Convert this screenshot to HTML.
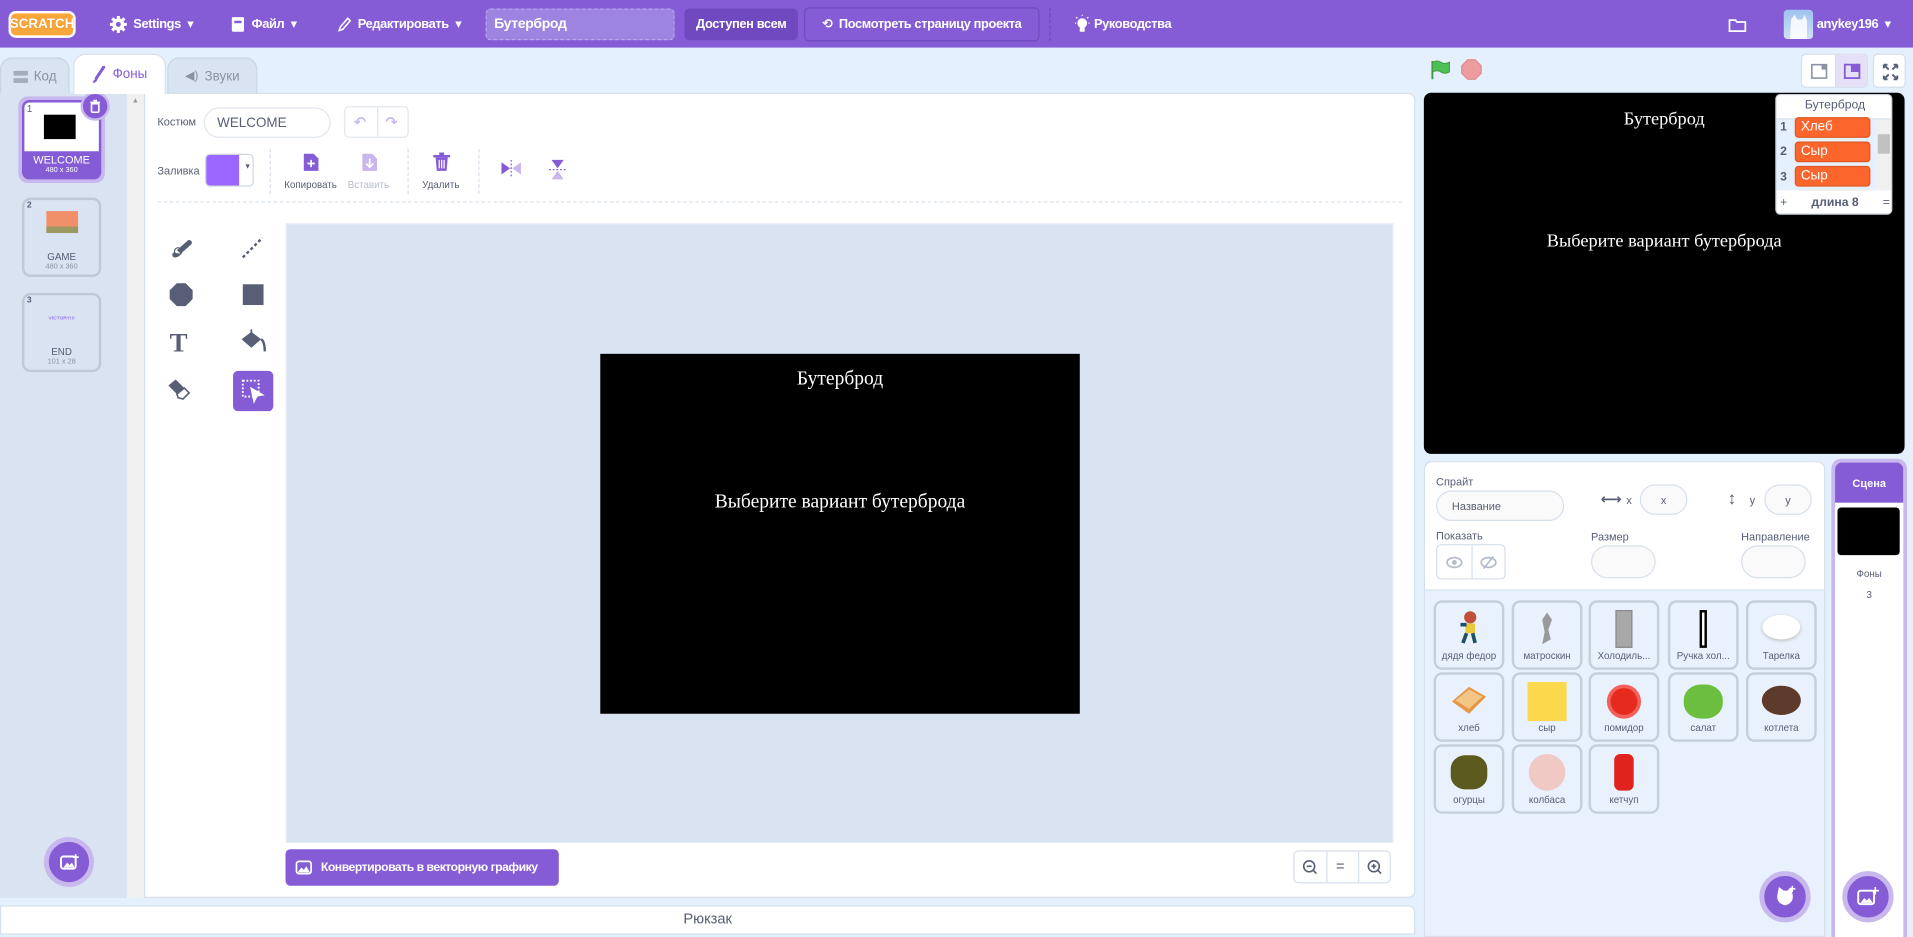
<!DOCTYPE html>
<html><head><meta charset="utf-8">
<style>
*{box-sizing:border-box;margin:0;padding:0}
html,body{width:1913px;height:931px;overflow:hidden;background:#e5f0ff;font-family:"Liberation Sans","DejaVu Sans",sans-serif}
#r{position:absolute;left:0;top:0;width:1568px;height:763px;transform:scale(1.2201);transform-origin:0 0;background:#e5f0ff}
.a{position:absolute}
.top{left:0;top:0;width:1568px;height:39px;background:#855cd6;color:#fff;font-size:10.5px;font-weight:bold}
.top .a{display:flex;align-items:center;height:39px;top:0;letter-spacing:-0.3px;white-space:nowrap}
.tab{top:47px;height:30px;border:1px solid #c9d4e3;border-bottom:none;border-radius:10px 10px 0 0;background:#d9e3f2;color:#8a93a3;font-size:11px;display:flex;align-items:center;justify-content:center;gap:5px}
.pnl{background:#fff;border:1px solid #d6dfeb}
.lbl{font-size:9px;color:#575e75}
.tile{width:58px;height:57px;border:2px solid #c5cfdc;border-radius:7px;background:#e9f1fc;font-size:8px;color:#575e75;text-align:center}
.tile .n{position:absolute;bottom:5px;left:0;right:0}
.tile .p{position:absolute;left:50%;top:6px;transform:translateX(-50%)}
.li{left:15px;width:62px;height:17px;background:#fc662c;border:1px solid #e0561f;border-radius:3px;color:#fff;font-size:11px;padding-left:4px;line-height:15px}
.ln{left:3px;font-size:10px;color:#575e75;font-weight:bold}
.circ{border-radius:50%;background:#855cd6;border:4px solid #c9b8ee}
</style></head><body><div id="r">
<div class="a top">
 <div class="a" style="left:7px"><div style="background:#f9a73b;border:2px solid #fff;border-radius:6px;width:55px;height:22px;color:#fff;font-size:11px;font-weight:bold;display:flex;align-items:center;justify-content:center;letter-spacing:0;text-shadow:0 0 1px #e07a00">SCRATCH</div></div>
 <div class="a" style="left:90px"><svg width="14" height="14" viewBox="0 0 14 14"><circle cx="7" cy="7" r="5" fill="#fff"/><g stroke="#fff" stroke-width="2.5"><path d="M7 0v14M0 7h14M2 2l10 10M12 2 2 12"/></g><circle cx="7" cy="7" r="2" fill="#855cd6"/></svg>&nbsp;&nbsp;Settings&nbsp;&nbsp;▾</div>
 <div class="a" style="left:189px"><svg width="12" height="14"><rect x="1" y="1" width="10" height="12" rx="1" fill="#fff"/><rect x="3" y="4" width="6" height="2" fill="#855cd6"/></svg>&nbsp;&nbsp;Файл&nbsp;&nbsp;▾</div>
 <div class="a" style="left:276px"><svg width="12" height="14"><path d="M2 12 L3 9 L9 2 L11 4 L5 11Z" fill="none" stroke="#fff" stroke-width="1.3"/></svg>&nbsp;&nbsp;Редактировать&nbsp;&nbsp;▾</div>
 <div class="a" style="left:398px;top:7px;height:26px;width:155px;background:#9d84e0;border:1px dashed #b9a6ec;border-radius:4px;padding-left:6px;font-size:11.5px">Бутерброд</div>
 <div class="a" style="left:561px;top:7px;height:26px;width:93px;background:#7048bf;border-radius:4px;justify-content:center">Доступен всем</div>
 <div class="a" style="left:659px;top:6px;height:28px;width:193px;border:1px solid #6d4ab9;border-radius:4px;justify-content:center">⟲&nbsp;&nbsp;Посмотреть страницу проекта</div>
 <div class="a" style="left:860px;top:6px;height:28px;border-left:1px dashed #6d4ab9"></div>
 <div class="a" style="left:880px"><svg width="14" height="16"><circle cx="7" cy="7" r="4" fill="#fff"/><rect x="5" y="10" width="4" height="4" fill="#fff"/><path d="M7 0v1M1 7h1M12 7h1M2 2l1 1M12 2l-1 1" stroke="#fff"/></svg>&nbsp;Руководства</div>
 <div class="a" style="left:1416px"><svg width="16" height="14"><path d="M1.5 3.5h5l1 1.5h7v7.5h-13z" fill="none" stroke="#fff" stroke-width="1.4"/></svg></div>
 <div class="a" style="left:1462px"><div style="width:24px;height:24px;border-radius:3px;background:linear-gradient(#9ec3ef,#cfe2f7)"><svg width="24" height="24"><path d="M5 24 L6 8 L9 4 L11 8 L15 8 L17 4 L19 9 L19 24Z" fill="#fff" opacity=".85"/></svg></div></div>
 <div class="a" style="left:1489px">anykey196&nbsp;&nbsp;▾</div>
</div>
<div class="a tab" style="left:0;width:57px"><svg width="12" height="10"><rect x="0" y="0" width="12" height="4" rx="1" fill="#a5adbb"/><rect x="0" y="6" width="12" height="4" rx="1" fill="#a5adbb"/></svg>Код</div>
<div class="a tab" style="left:60px;width:76px;top:44px;height:33px;background:#fff;color:#855cd6;z-index:2;border-color:#d6dfeb"><svg width="12" height="14"><path d="M10 1 L4 10" stroke="#855cd6" stroke-width="2.5" stroke-linecap="round"/><path d="M4 10 Q1 12 1 14 Q4 14 5 11Z" fill="#855cd6"/></svg>Фоны</div>
<div class="a tab" style="left:137px;width:74px"><span style="font-size:10px">◀)</span>Звуки</div>
<div class="a" style="left:0;top:76px;width:104px;height:660px;background:#d9e3f2"></div>
<div class="a" style="left:104px;top:76px;width:14px;height:660px;background:#f0f0f0"><div style="font-size:6px;color:#999;text-align:center;margin-top:4px">▲</div></div>
<div class="a" style="left:15px;top:79px;width:71px;height:71px;border-radius:8px;background:#c9b8ee"></div>
<div class="a" style="left:18px;top:82px;width:65px;height:65px;border-radius:6px;background:#855cd6;overflow:hidden">
 <div class="a" style="left:2px;top:2px;width:61px;height:40px;background:#fff;border-radius:4px 4px 0 0"></div>
 <div class="a" style="left:4px;top:3px;font-size:8px;color:#575e75">1</div>
 <div class="a" style="left:18px;top:12px;width:26px;height:20px;background:#000"></div>
 <div class="a" style="left:0;width:65px;top:44px;font-size:9px;color:#fff;text-align:center">WELCOME</div>
 <div class="a" style="left:0;width:65px;top:55px;font-size:6px;color:#fff;text-align:center">480 x 360</div>
</div>
<div class="a circ" style="left:66px;top:75px;width:24px;height:24px;border-width:2px;display:flex;align-items:center;justify-content:center"><svg width="10" height="12"><path d="M1 3h8M3.5 1.5h3" stroke="#fff" stroke-width="1.4"/><rect x="2" y="4" width="6" height="7" rx="1" fill="none" stroke="#fff" stroke-width="1.3"/></svg></div>
<div class="a" style="left:18px;top:162px;width:65px;height:65px;border:2px solid #bfc9d6;border-radius:7px;background:#d9e3f2">
 <div class="a" style="left:2px;top:1px;font-size:7px;color:#575e75;font-weight:bold">2</div>
 <div class="a" style="left:18px;top:9px;width:26px;height:18px;background:linear-gradient(#f28f6b 70%,#9a9a62 70%)"></div>
 <div class="a" style="left:0;width:61px;top:42px;font-size:8px;color:#575e75;text-align:center">GAME</div>
 <div class="a" style="left:0;width:61px;top:52px;font-size:6px;color:#8a93a3;text-align:center">480 x 360</div>
</div>
<div class="a" style="left:18px;top:240px;width:65px;height:65px;border:2px solid #bfc9d6;border-radius:7px;background:#d9e3f2">
 <div class="a" style="left:2px;top:1px;font-size:7px;color:#575e75;font-weight:bold">3</div>
 <div class="a" style="left:0;width:61px;top:16px;font-size:4px;color:#9a77f0;text-align:center;font-weight:bold">VICTORY!!!</div>
 <div class="a" style="left:0;width:61px;top:42px;font-size:8px;color:#575e75;text-align:center">END</div>
 <div class="a" style="left:0;width:61px;top:52px;font-size:6px;color:#8a93a3;text-align:center">101 x 28</div>
</div>
<div class="a circ" style="left:36px;top:686px;width:41px;height:41px;display:flex;align-items:center;justify-content:center"><svg width="16" height="14"><rect x="1" y="2" width="12" height="10" rx="2" fill="none" stroke="#fff" stroke-width="1.6"/><path d="M3 11l3-4 2 2 2-2 2 4z" fill="#fff"/><path d="M13 0v5M10.5 2.5h5" stroke="#fff" stroke-width="1.4"/></svg></div>
<div class="a pnl" style="left:118px;top:76px;width:1042px;height:660px;border-radius:0 6px 6px 0"></div>
<div class="a lbl" style="left:129px;top:95px;font-size:9px">Костюм</div>
<div class="a" style="left:167px;top:88px;width:104px;height:25px;border:1px solid #e1e6ee;border-radius:13px;font-size:11px;color:#575e75;padding:6px 0 0 10px">WELCOME</div>
<div class="a" style="left:282px;top:87px;width:53px;height:26px;border:1px solid #e1e6ee;border-radius:4px"><div class="a" style="left:26px;top:0;height:24px;border-left:1px solid #e1e6ee"></div><div class="a" style="left:7px;top:5px;color:#c9b8ee;font-size:12px;font-weight:bold">↶</div><div class="a" style="left:33px;top:5px;color:#c9b8ee;font-size:12px;font-weight:bold">↷</div></div>
<div class="a lbl" style="left:129px;top:135px">Заливка</div>
<div class="a" style="left:168px;top:126px;width:40px;height:27px;border:1px solid #cfd6e1;border-radius:4px;overflow:hidden"><div style="width:27px;height:27px;background:#9966ff"></div><div class="a" style="left:31px;top:7px;font-size:6px;color:#575e75">▼</div></div>
<div class="a" style="left:221px;top:122px;height:37px;border-left:1px dashed #d6dfeb"></div>
<div class="a" style="left:334px;top:122px;height:37px;border-left:1px dashed #d6dfeb"></div>
<div class="a" style="left:392px;top:122px;height:37px;border-left:1px dashed #d6dfeb"></div>
<svg class="a" style="left:248px;top:125px" width="14" height="16"><path d="M1 1h8l4 4v10H1z" fill="#855cd6"/><path d="M7 6v6M4 9h6" stroke="#fff" stroke-width="1.4"/></svg>
<div class="a lbl" style="left:233px;top:147px;font-size:8px">Копировать</div>
<svg class="a" style="left:296px;top:125px" width="14" height="16" opacity=".45"><path d="M1 1h8l4 4v10H1z" fill="#855cd6"/><path d="M7 5v7M4 9l3 3 3-3" stroke="#fff" stroke-width="1.4" fill="none"/></svg>
<div class="a lbl" style="left:285px;top:147px;font-size:8px;color:#b6bccc">Вставить</div>
<svg class="a" style="left:355px;top:125px" width="14" height="16"><path d="M0 3h14M5 1h4" stroke="#855cd6" stroke-width="2"/><path d="M2 4h10l-1 11H3z" fill="#855cd6"/><path d="M5 6v7M7 6v7M9 6v7" stroke="#fff"/></svg>
<div class="a lbl" style="left:346px;top:147px;font-size:8px">Удалить</div>
<svg class="a" style="left:409px;top:131px" width="20" height="14"><path d="M2 2l7 5-7 5z" fill="#855cd6"/><path d="M18 2l-7 5 7 5z" fill="#c9b8ee"/><path d="M10 0v14" stroke="#855cd6" stroke-dasharray="1.5 1.5"/></svg>
<svg class="a" style="left:450px;top:129px" width="14" height="20"><path d="M2 2l5 7 5-7z" fill="#855cd6"/><path d="M2 18l5-7 5 7z" fill="#c9b8ee"/><path d="M0 10h14" stroke="#855cd6" stroke-dasharray="1.5 1.5"/></svg>
<div class="a" style="left:129px;top:165px;width:1020px;border-top:1px dashed #d6dfeb"></div>
<svg class="a" style="left:137px;top:193px" width="24" height="20"><path d="M8 12 L17 4 Q19 3 20 5 Q21 6 19 8 L11 15Z" fill="#575e75"/><path d="M5 14 Q3 17 6 18 Q10 18 11 15Z" fill="#575e75"/><circle cx="9" cy="13" r="3" fill="none" stroke="#575e75"/></svg>
<svg class="a" style="left:196px;top:193px" width="22" height="20"><path d="M3 18 L19 2" stroke="#575e75" stroke-width="2" stroke-dasharray="2.5 2"/></svg>
<svg class="a" style="left:139px;top:232px" width="19" height="19"><path d="M6 0h7l6 6v7l-6 6H6l-6-6V6z" fill="#575e75"/></svg>
<div class="a" style="left:199px;top:233px;width:17px;height:17px;background:#575e75"></div>
<div class="a" style="left:139px;top:268px;font-family:'Liberation Serif',serif;font-size:22px;font-weight:bold;color:#575e75">T</div>
<svg class="a" style="left:196px;top:269px" width="24" height="22"><path d="M2 9 L10 3 L18 9 L10 16Z" fill="#575e75"/><path d="M10 1 v7" stroke="#575e75" stroke-width="1.5"/><path d="M18 9 Q21 11 21 19" stroke="#575e75" stroke-width="2" fill="none"/></svg>
<svg class="a" style="left:136px;top:308px" width="24" height="22"><path d="M2 8 L8 3 L15 10 L9 15Z" fill="#575e75"/><path d="M9 15 L15 10 L19 14 L14 19 L10 18Z" fill="#fff" stroke="#575e75" stroke-width="1.3"/></svg>
<div class="a" style="left:191px;top:304px;width:33px;height:33px;background:#855cd6;border-radius:4px"><svg width="33" height="33"><rect x="8" y="8" width="13" height="13" fill="none" stroke="#fff" stroke-width="1.5" stroke-dasharray="1.5 1.5"/><path d="M14 13 L26 20 L20 21 L17 27Z" fill="#fff"/></svg></div>
<div class="a" style="left:234px;top:183px;width:908px;height:508px;background:#d9e3f2;border:1px solid #e8edf5"></div>
<div class="a" style="left:492px;top:290px;width:393px;height:295px;background:#000;color:#fff;font-family:'Liberation Serif',serif;text-align:center">
 <div class="a" style="left:0;right:0;top:12px;font-size:16px">Бутерброд</div>
 <div class="a" style="left:0;right:0;top:113px;font-size:16px">Выберите вариант бутерброда</div>
</div>
<div class="a" style="left:234px;top:696px;width:224px;height:30px;background:#855cd6;border-radius:4px;color:#fff;font-size:10px;font-weight:bold;display:flex;align-items:center;padding-left:8px;gap:7px;letter-spacing:-0.4px;white-space:nowrap"><svg width="14" height="12"><rect x="1" y="1" width="12" height="10" rx="2" fill="none" stroke="#fff" stroke-width="1.4"/><path d="M2 10l3-4 2 2 2-3 3 5z" fill="#fff"/></svg>Конвертировать в векторную графику</div>
<div class="a" style="left:1060px;top:697px;width:80px;height:27px;border:1px solid #d6dfeb;border-radius:4px;color:#575e75;font-size:12px">
 <div class="a" style="left:26px;top:0;height:25px;border-left:1px solid #d6dfeb"></div><div class="a" style="left:52px;top:0;height:25px;border-left:1px solid #d6dfeb"></div>
 <svg class="a" style="left:6px;top:6px" width="14" height="14"><circle cx="6" cy="6" r="4.5" fill="none" stroke="#575e75" stroke-width="1.3"/><path d="M4 6h4M9 9l3 3" stroke="#575e75" stroke-width="1.3"/></svg>
 <div class="a" style="left:34px;top:5px">=</div>
 <svg class="a" style="left:59px;top:6px" width="14" height="14"><circle cx="6" cy="6" r="4.5" fill="none" stroke="#575e75" stroke-width="1.3"/><path d="M4 6h4M6 4v4M9 9l3 3" stroke="#575e75" stroke-width="1.3"/></svg>
</div>
<div class="a" style="left:0;top:742px;width:1160px;height:24px;background:#fff;border:1px solid #d6dfeb;border-radius:0 6px 0 0;text-align:center;font-size:12px;color:#575e75;padding-top:3px">Рюкзак</div>
<svg class="a" style="left:1172px;top:48px" width="18" height="18"><path d="M2 2v15" stroke="#45993d" stroke-width="1.6"/><path d="M2 3 Q6 1 9 3 Q12 5 16 3 V11 Q12 13 9 11 Q6 9 2 11Z" fill="#4cbf56" stroke="#45993d" stroke-width=".8"/></svg>
<svg class="a" style="left:1197px;top:48px" width="18" height="18"><path d="M6 1h6l5 5v6l-5 5H6l-5-5V6z" fill="#ec9c9c" stroke="#e08d8d"/></svg>
<div class="a" style="left:1476px;top:44px;width:55px;height:28px;border:1px solid #d6dfeb;border-radius:4px;background:#fff;overflow:hidden"><div class="a" style="left:27px;top:0;width:28px;height:28px;background:#e5e0f7;border-left:1px solid #d6dfeb"></div>
 <svg class="a" style="left:7px;top:7px" width="14" height="13"><rect x="1" y="1" width="12" height="11" fill="none" stroke="#8a93a3" stroke-width="1.3"/><rect x="9" y="1" width="4" height="4" fill="#8a93a3"/></svg>
 <svg class="a" style="left:34px;top:7px" width="14" height="13"><rect x="1" y="1" width="12" height="11" fill="none" stroke="#855cd6" stroke-width="1.5"/><rect x="6" y="1" width="7" height="6" fill="#855cd6"/></svg>
</div>
<div class="a" style="left:1535px;top:44px;width:27px;height:28px;border:1px solid #d6dfeb;border-radius:4px;background:#fff"><svg width="27" height="28"><path d="M8 8l4 4M19 8l-4 4M8 20l4-4M19 20l-4-4M8 8h3M8 8v3M19 8h-3M19 8v3M8 20h3M8 20v-3M19 20h-3M19 20v-3" stroke="#575e75" stroke-width="1.6"/></svg></div>
<div class="a" style="left:1167px;top:76px;width:394px;height:296px;background:#000;border-radius:6px;color:#fff;font-family:'Liberation Serif',serif;text-align:center">
 <div class="a" style="left:0;right:0;top:14px;font-size:15px">Бутерброд</div>
 <div class="a" style="left:0;right:0;top:114px;font-size:15px">Выберите вариант бутерброда</div>
</div>
<div class="a" style="left:1455px;top:77px;width:96px;height:99px;background:#e5f0ff;border:1px solid #c5cfdc;border-radius:4px;overflow:hidden">
 <div class="a" style="left:0;top:0;width:96px;height:20px;background:#fff;text-align:center;font-size:10px;color:#575e75;padding-top:3px;border-bottom:1px solid #d6dfeb">Бутерброд</div>
 <div class="a ln" style="top:21px">1</div><div class="a li" style="top:18px">Хлеб</div>
 <div class="a ln" style="top:41px">2</div><div class="a li" style="top:38px">Сыр</div>
 <div class="a ln" style="top:62px">3</div><div class="a li" style="top:58px">Сыр</div>
 <div class="a li" style="top:78px"></div>
 <div class="a" style="left:81px;top:20px;width:14px;height:58px;background:#f0f0f0"><div style="margin:12px 2px 0;height:16px;background:#c1c1c1"></div></div>
 <div class="a" style="left:0;top:78px;width:96px;height:20px;background:#fff;font-size:10px;color:#575e75;display:flex;justify-content:space-between;align-items:center;padding:0 3px"><span>+</span><b>длина 8</b><span>=</span></div>
</div>
<div class="a" style="left:1167px;top:378px;width:329px;height:390px;background:#e9f1fc;border:1px solid #d6dfeb;border-radius:6px 6px 0 0"></div>
<div class="a" style="left:1168px;top:379px;width:327px;height:105px;background:#fff;border-bottom:1px solid #d6dfeb;border-radius:6px 6px 0 0"></div>
<div class="a lbl" style="left:1177px;top:390px">Спрайт</div>
<div class="a" style="left:1177px;top:402px;width:105px;height:25px;border:1px solid #d6dfeb;border-radius:13px;background:#fafafa;font-size:9px;color:#575e75;padding:7px 0 0 12px">Название</div>
<div class="a" style="left:1312px;top:402px;font-size:12px;color:#575e75;font-weight:bold">⟷</div>
<div class="a lbl" style="left:1333px;top:405px">x</div>
<div class="a" style="left:1344px;top:397px;width:39px;height:25px;border:1px solid #d6dfeb;border-radius:13px;background:#fafafa;font-size:9px;color:#575e75;text-align:center;padding-top:7px">x</div>
<div class="a" style="left:1416px;top:400px;font-size:14px;color:#575e75;font-weight:bold">↕</div>
<div class="a lbl" style="left:1434px;top:405px">y</div>
<div class="a" style="left:1446px;top:397px;width:39px;height:25px;border:1px solid #d6dfeb;border-radius:13px;background:#fafafa;font-size:9px;color:#575e75;text-align:center;padding-top:7px">y</div>
<div class="a lbl" style="left:1177px;top:434px">Показать</div>
<div class="a" style="left:1177px;top:446px;width:57px;height:29px;border:1px solid #d6dfeb;border-radius:4px"><div class="a" style="left:28px;top:0;height:27px;border-left:1px solid #d6dfeb"></div>
 <svg class="a" style="left:7px;top:8px" width="14" height="12"><ellipse cx="7" cy="6" rx="6" ry="4" fill="none" stroke="#b6bccc" stroke-width="1.4"/><circle cx="7" cy="6" r="2" fill="#b6bccc"/></svg>
 <svg class="a" style="left:35px;top:7px" width="14" height="14"><ellipse cx="7" cy="7" rx="6" ry="4" fill="none" stroke="#b6bccc" stroke-width="1.4"/><path d="M3 12 L11 2" stroke="#b6bccc" stroke-width="1.4"/></svg>
</div>
<div class="a lbl" style="left:1304px;top:435px">Размер</div>
<div class="a" style="left:1304px;top:447px;width:53px;height:27px;border:1px solid #d6dfeb;border-radius:14px;background:#fafafa"></div>
<div class="a lbl" style="left:1427px;top:435px">Направление</div>
<div class="a" style="left:1427px;top:447px;width:53px;height:27px;border:1px solid #d6dfeb;border-radius:14px;background:#fafafa"></div>
<div class="a tile" style="left:1175px;top:492px"><svg class="p" width="20" height="30"><circle cx="11" cy="6" r="5" fill="#c0503a"/><rect x="7" y="11" width="8" height="8" fill="#e8c93a"/><path d="M3 12h5M8 19l-3 8M13 19l2 8" stroke="#1d4f6a" stroke-width="3"/></svg><div class="n">дядя федор</div></div>
<div class="a tile" style="left:1239px;top:492px"><svg class="p" width="20" height="30"><path d="M10 2 L14 8 L11 16 L13 24 L6 28 L8 18 L6 8Z" fill="#9a9a9a"/></svg><div class="n">матроскин</div></div>
<div class="a tile" style="left:1302px;top:492px"><div class="p" style="width:14px;height:31px;background:#a8a8a8;border:1px solid #888"></div><div class="n">Холодиль...</div></div>
<div class="a tile" style="left:1367px;top:492px"><div class="p" style="width:6px;height:31px;background:#fff;border:2px solid #000"></div><div class="n">Ручка хол...</div></div>
<div class="a tile" style="left:1431px;top:492px"><div class="p" style="width:31px;height:20px;top:10px;border-radius:50%;background:#fff;box-shadow:0 1px 3px #bbb"></div><div class="n">Тарелка</div></div>
<div class="a tile" style="left:1175px;top:551px"><svg class="p" width="32" height="28"><path d="M2 16 L16 4 L30 12 L16 26Z" fill="#e59845"/><path d="M5 15 L16 6 L27 12 L16 22Z" fill="#f3c586"/></svg><div class="n">хлеб</div></div>
<div class="a tile" style="left:1239px;top:551px"><div class="p" style="width:32px;height:32px;background:#fcd94c"></div><div class="n">сыр</div></div>
<div class="a tile" style="left:1302px;top:551px"><div class="p" style="width:28px;height:28px;top:8px;border-radius:50%;background:#e62a1e;border:3px solid #f5615a"></div><div class="n">помидор</div></div>
<div class="a tile" style="left:1367px;top:551px"><div class="p" style="width:32px;height:28px;top:8px;border-radius:45%;background:#6cbe3f"></div><div class="n">салат</div></div>
<div class="a tile" style="left:1431px;top:551px"><div class="p" style="width:32px;height:24px;top:9px;border-radius:50%;background:#5d3a2a"></div><div class="n">котлета</div></div>
<div class="a tile" style="left:1175px;top:610px"><div class="p" style="width:30px;height:28px;top:7px;border-radius:40%;background:#5c5a1e"></div><div class="n">огурцы</div></div>
<div class="a tile" style="left:1239px;top:610px"><div class="p" style="width:30px;height:30px;top:6px;border-radius:50%;background:#f0c9c5"></div><div class="n">колбаса</div></div>
<div class="a tile" style="left:1302px;top:610px"><div class="p" style="width:16px;height:30px;top:6px;border-radius:5px;background:#e0231c"></div><div class="n">кетчуп</div></div>
<div class="a circ" style="left:1442px;top:714px;width:42px;height:42px;display:flex;align-items:center;justify-content:center"><svg width="18" height="18"><path d="M3 6 L4 1 L8 4 L11 4 L14 1 L15 6 Q17 14 9 16 Q1 14 3 6Z" fill="#fff"/><path d="M15 0v5M12.5 2.5h5" stroke="#fff" stroke-width="1.2"/></svg></div>
<div class="a" style="left:1501px;top:376px;width:62px;height:392px;background:#c9b8ee;border-radius:8px 8px 0 0"></div>
<div class="a" style="left:1504px;top:379px;width:56px;height:389px;background:#fff;border-radius:6px 6px 0 0;overflow:hidden">
 <div style="height:33px;background:#855cd6;color:#fff;font-size:9px;font-weight:bold;text-align:center;padding-top:12px">Сцена</div>
 <div class="a" style="left:2px;top:37px;width:51px;height:39px;background:#000;border-radius:3px"></div>
 <div class="a lbl" style="left:0;right:0;top:87px;text-align:center;font-size:8px">Фоны</div>
 <div class="a lbl" style="left:0;right:0;top:104px;text-align:center;font-size:8px">3</div>
</div>
<div class="a circ" style="left:1510px;top:714px;width:42px;height:42px;display:flex;align-items:center;justify-content:center"><svg width="18" height="16"><rect x="1" y="3" width="13" height="11" rx="2" fill="none" stroke="#fff" stroke-width="1.6"/><path d="M3 13l3-4 2 2 2-2 3 4z" fill="#fff"/><path d="M15 0v6M12 3h6" stroke="#fff" stroke-width="1.3"/></svg></div>
</div></body></html>
